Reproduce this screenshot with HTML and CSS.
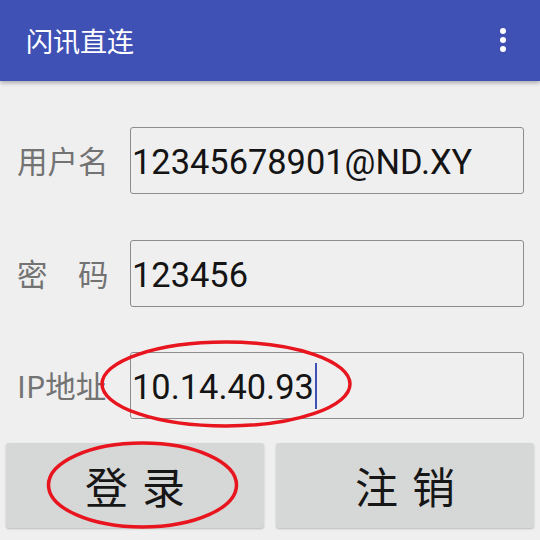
FILE: index.html
```html
<!DOCTYPE html>
<html lang="zh-CN">
<head>
<meta charset="utf-8">
<title>闪讯直连</title>
<link rel="stylesheet" href="styles.css">
</head>
<body>
<div class="app">
  <header class="appbar">
    <span class="title">闪讯直连</span>
    <span class="menu" aria-label="更多">
      <svg width="8" height="26" viewBox="0 0 8 26"><circle cx="4" cy="4" r="3" fill="#fff"/><circle cx="4" cy="13" r="3" fill="#fff"/><circle cx="4" cy="22" r="3" fill="#fff"/></svg>
    </span>
  </header>
  <main class="form">
    <div class="row">
      <span class="label">用户名</span>
      <div class="field"><span class="value">12345678901@ND.XY</span></div>
    </div>
    <div class="row">
      <span class="label">密　码</span>
      <div class="field"><span class="value">123456</span></div>
    </div>
    <div class="row">
      <span class="label">IP地址</span>
      <div class="field"><span class="value">10.14.40.93</span><span class="cursor"></span></div>
    </div>
    <div class="buttons">
      <button class="btn"><span>登</span><span>录</span></button>
      <button class="btn"><span>注</span><span>销</span></button>
    </div>
  </main>
  <svg class="marks" width="540" height="540" viewBox="0 0 540 540">
    <ellipse cx="226" cy="384" rx="124" ry="42" fill="none" stroke="#e8141e" stroke-width="3.5"/>
    <ellipse cx="142.5" cy="485" rx="94" ry="42" fill="none" stroke="#e8141e" stroke-width="3.5"/>
  </svg>
</div>
</body>
</html>
```
FILE: styles.css
```css
* { box-sizing: border-box; }
html, body { margin: 0; padding: 0; }
body {
  background: #efefef;
  font-family: "Roboto", "Noto Sans CJK SC", sans-serif;
  width: 540px;
  height: 540px;
  overflow: hidden;
}
.app { position: relative; width: 540px; height: 540px; }
.appbar {
  height: 81px;
  background: #3f51b5;
  display: flex;
  align-items: center;
  justify-content: space-between;
  padding: 0 33px 0 26px;
  box-shadow: 0 2px 4px rgba(0,0,0,0.28);
  position: relative;
  z-index: 1;
}
.title {
  color: #fff;
  font-family: "Noto Sans CJK SC", sans-serif;
  font-size: 27px;
  line-height: 1;
  margin-top: -1px;
}
.menu { display: flex; margin-top: -1px; }
.form {
  padding: 46px 16px 0 17px;
  display: flex;
  flex-direction: column;
}
.row {
  display: flex;
  align-items: center;
  height: 67px;
  margin-bottom: 45.5px;
}
.label {
  width: 113px;
  flex: none;
  color: #737373;
  font-family: "Noto Sans CJK SC", sans-serif;
  font-size: 30.5px;
  line-height: 1;
  white-space: nowrap;
}
.field {
  flex: 1;
  height: 67px;
  border: 1px solid #8c8c8c;
  border-radius: 3px;
  display: flex;
  align-items: center;
  padding-left: 1px;
  padding-top: 4px;
}
.value {
  color: #141414;
  font-family: "Roboto", sans-serif;
  font-size: 34.4px;
  line-height: 1;
}
.cursor {
  width: 2px;
  height: 46px;
  background: #3f51b5;
  margin-left: 1px;
  margin-top: -4px;
}
.buttons {
  display: flex;
  gap: 12px;
  margin: -21.5px -10px 0 -11px;
}
.btn {
  flex: 1;
  height: 85px;
  border: none;
  border-radius: 3px;
  background: #d6d7d7;
  box-shadow: 0 1px 2px rgba(0,0,0,0.22);
  display: flex;
  align-items: center;
  justify-content: center;
  gap: 14px;
  font-family: "Noto Sans CJK SC", sans-serif;
  font-size: 43px;
  color: #161616;
  padding: 0;
  line-height: 1;
}
.marks {
  position: absolute;
  left: 0;
  top: 0;
  pointer-events: none;
  z-index: 2;
}
```
